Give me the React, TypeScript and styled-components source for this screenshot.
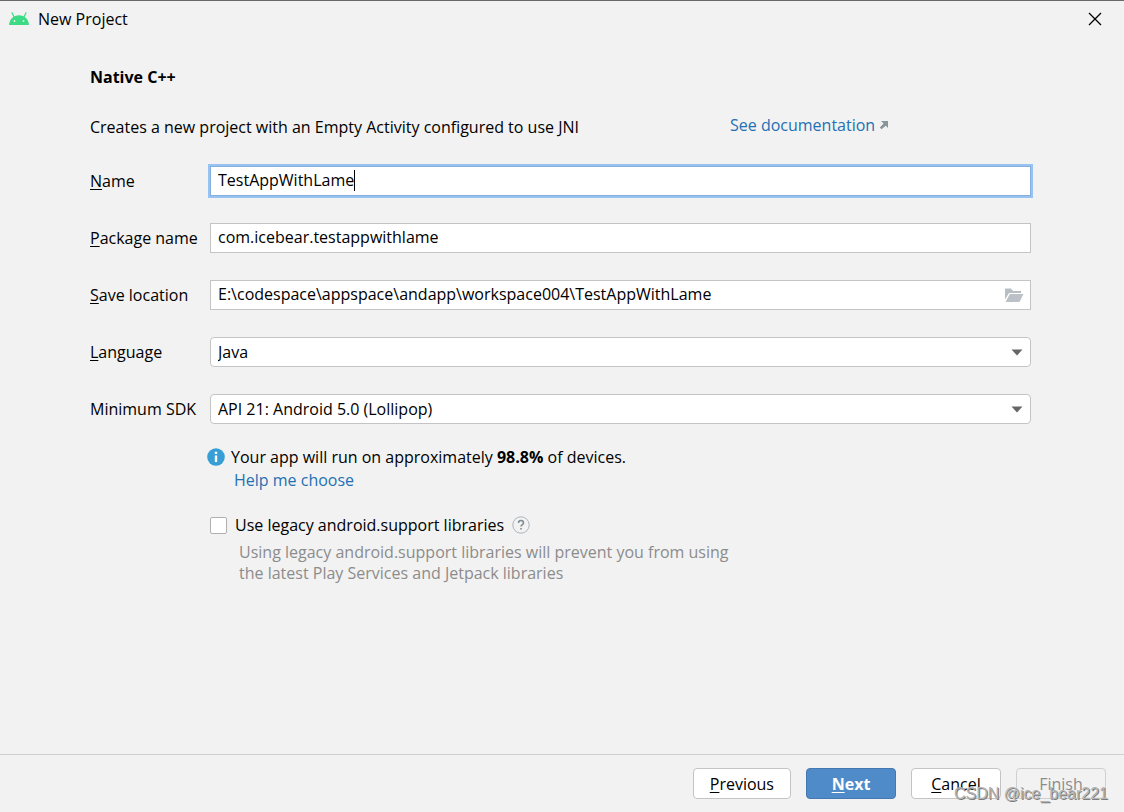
import { useState } from "react";
import type { ReactNode } from "react";
import styled, { createGlobalStyle, css } from "styled-components";

const GlobalStyle = createGlobalStyle`
  *, *::before, *::after { box-sizing: border-box; }
  body {
    margin: 0;
    background: #f2f2f2;
    color: #000;
    font: 16px/22px "Open Sans", "Noto Sans", sans-serif;
  }
  input, select, button { font: inherit; color: inherit; }
`;

const Dialog = styled.div`
  display: flex;
  flex-direction: column;
  min-height: 100vh;
  background: #f2f2f2;
  border-top: 1px solid #6b6869;
`;

const TitleBar = styled.header`
  display: flex;
  align-items: center;
  height: 36px;
  padding: 0 16px 0 8px;
  gap: 8px;
`;

const WindowTitle = styled.span`
  flex: 1;
`;

const CloseButton = styled.button`
  display: flex;
  padding: 6px;
  border: 0;
  background: transparent;
`;

const Content = styled.main`
  flex: 1;
  padding: 29px 93px 24px 90px;
`;

const Heading = styled.h1`
  margin: 0;
  font-size: 16px;
  line-height: 22px;
  font-weight: 700;
`;

const Intro = styled.div`
  display: flex;
  align-items: flex-start;
  margin: 26px 0 28px;
`;

const Description = styled.p`
  flex: 0 0 640px;
  margin: 0;
  padding-top: 2px;
`;

const Link = styled.a`
  display: inline-flex;
  align-items: center;
  gap: 4px;
  color: #2470b3;
  text-decoration: none;
`;

const Form = styled.form`
  display: grid;
  grid-template-columns: 120px 1fr;
  row-gap: 27px;
  align-items: center;
`;

const Label = styled.label`
  white-space: nowrap;
`;

const Mnemonic = styled.span`
  text-decoration: underline;
  text-decoration-thickness: 1px;
  text-underline-offset: 2px;
  text-decoration-skip-ink: none;
`;

const Field = styled.div`
  position: relative;
  display: flex;
`;

const TextInput = styled.input<{ $active?: boolean }>`
  width: 100%;
  height: 30px;
  padding: 0 7px 2px;
  border: 1px solid #c4c4c4;
  border-radius: 0;
  outline: none;
  background: #fff;
  ${({ $active }) =>
    $active &&
    css`
      border-color: #87afda;
      box-shadow: 0 0 0 2px #97c3f3;
    `}
`;

const Caret = styled.span`
  position: absolute;
  top: 4px;
  left: 144px;
  width: 1px;
  height: 21px;
  background: #000;
`;

const BrowseButton = styled.button`
  position: absolute;
  right: 7px;
  top: 7px;
  display: flex;
  padding: 0;
  border: 0;
  background: transparent;
`;

const Select = styled.select`
  appearance: none;
  width: 100%;
  height: 30px;
  padding: 0 30px 0 7px;
  border: 1px solid #c4c4c4;
  border-radius: 4px;
  background: #fff;
`;

const Arrow = styled.svg`
  position: absolute;
  right: 8px;
  top: 12px;
  pointer-events: none;
`;

const Notes = styled.section`
  padding: 22px 0 0 117px;
`;

const NoteLine = styled.div`
  display: flex;
  align-items: center;
  gap: 6px;
`;

const HelpLine = styled.div`
  padding: 1px 0 0 27px;
`;

const Legacy = styled.div`
  display: flex;
  align-items: center;
  margin-top: 23px;
  padding-left: 3px;
`;

const Checkbox = styled.input`
  appearance: none;
  width: 17px;
  height: 17px;
  margin: 0 8px 0 0;
  border: 1px solid #b0b0b0;
  border-radius: 2px;
  background: #fff;
  &:checked { background: #4f8bc9; }
`;

const HelpButton = styled.button`
  display: flex;
  margin-left: 8px;
  padding: 0;
  border: 0;
  background: transparent;
`;

const Hint = styled.p`
  max-width: 560px;
  margin: 6px 0 0;
  padding-left: 32px;
  line-height: 21px;
  color: #8c8c8c;
`;

const Footer = styled.footer`
  position: relative;
  display: flex;
  justify-content: flex-end;
  gap: 15px;
  padding: 13px 18px 13px;
  border-top: 1px solid #cfcfcf;
`;

const Button = styled.button<{ $primary?: boolean }>`
  min-width: 90px;
  height: 31px;
  padding: 0 16px;
  border: 1px solid #c4c4c4;
  border-radius: 4px;
  background: #fff;
  &:disabled {
    color: #8c8c8c;
    background: transparent;
    border-color: #cfcfcf;
  }
  ${({ $primary }) =>
    $primary &&
    css`
      border-color: #4578b0;
      background: #4f8bc9;
      color: #fff;
      font-weight: 700;
    `}
`;

const Watermark = styled.span`
  position: absolute;
  right: 16px;
  bottom: 7px;
  font: 16px/22px "Liberation Sans", sans-serif;
  color: #b4b4b4;
  text-shadow: 1px 1px 0 #7c7c7c;
  pointer-events: none;
`;

function AndroidIcon() {
  return (
    <svg width="22" height="16" viewBox="0 0 22 16" aria-hidden="true">
      <path d="M5.800 5.600 4 1.800M16.200 5.600 18 1.800" stroke="#3ddc84" strokeWidth="1.200" strokeLinecap="round" />
      <path d="M1 14C1.400 8 5.600 4.200 11 4.200S20.600 8 21 14Z" fill="#3ddc84" />
      <circle cx="6.500" cy="10" r="0.900" fill="#f2f2f2" />
      <circle cx="15.500" cy="10" r="0.900" fill="#f2f2f2" />
    </svg>
  );
}

function FolderIcon() {
  return (
    <svg width="20" height="16" viewBox="0 0 20 16" aria-hidden="true">
      <path d="M1 12.500V1.500H7L9 4H17V6H5Z" fill="#b8bfc4" />
      <path d="M1.500 15 5.800 7H19.500L15.500 15Z" fill="#bbc1c6" />
    </svg>
  );
}

function InfoIcon() {
  return (
    <svg width="18" height="18" viewBox="0 0 18 18" aria-hidden="true">
      <circle cx="9" cy="9" r="8.800" fill="#389fd6" />
      <path d="M7.800 3.800H10.200V6H7.800ZM7.800 7.500H10.200V14H7.800Z" fill="#fff" />
    </svg>
  );
}

function HelpIcon() {
  return (
    <svg width="18" height="18" viewBox="0 0 18 18" fill="none" aria-hidden="true">
      <circle cx="9" cy="9" r="8.200" stroke="#afb5ba" />
      <path d="M6.500 7.100C6.500 5.400 7.500 4.600 9 4.600S11.500 5.500 11.500 6.900C11.500 8.500 9 8.700 9 10.600" stroke="#7f8b91" strokeWidth="1.500" />
      <path d="M8.200 11.900H9.800V13.500H8.200Z" fill="#7f8b91" />
    </svg>
  );
}

function SelectArrow() {
  return (
    <Arrow width="12" height="7" viewBox="0 0 12 7" aria-hidden="true">
      <path d="M0.500 0.500H11.500L6 6.500Z" fill="#666" />
    </Arrow>
  );
}

function FieldRow({ id, label, children }: { id: string; label: ReactNode; children: ReactNode }) {
  return (
    <>
      <Label htmlFor={id}>{label}</Label>
      <Field>{children}</Field>
    </>
  );
}

export default function App() {
  const [name, setName] = useState("TestAppWithLame");
  const [pkg, setPkg] = useState("com.icebear.testappwithlame");
  const [path, setPath] = useState("E:\\codespace\\appspace\\andapp\\workspace004\\TestAppWithLame");

  return (
    <Dialog>
      <GlobalStyle />
      <TitleBar>
        <AndroidIcon />
        <WindowTitle>New Project</WindowTitle>
        <CloseButton aria-label="Close">
          <svg width="14" height="14" viewBox="0 0 14 14" aria-hidden="true">
            <path d="M1 1 13 13M13 1 1 13" stroke="#000" strokeWidth="1.300" />
          </svg>
        </CloseButton>
      </TitleBar>

      <Content>
        <Heading>Native C++</Heading>
        <Intro>
          <Description>Creates a new project with an Empty Activity configured to use JNI</Description>
          <Link href="#documentation">
            See documentation
            <svg width="10" height="10" viewBox="0 0 10 10" aria-hidden="true">
              <path d="M2 1H9V8L6.800 5.800 2.500 9.200 0.800 7.500 4.600 3.500Z" fill="#8a949b" />
            </svg>
          </Link>
        </Intro>

        <Form>
          <FieldRow id="name" label={<><Mnemonic>N</Mnemonic>ame</>}>
            <TextInput id="name" $active value={name} onChange={(e) => setName(e.target.value)} />
            <Caret />
          </FieldRow>
          <FieldRow id="package" label={<><Mnemonic>P</Mnemonic>ackage name</>}>
            <TextInput id="package" value={pkg} onChange={(e) => setPkg(e.target.value)} />
          </FieldRow>
          <FieldRow id="location" label={<><Mnemonic>S</Mnemonic>ave location</>}>
            <TextInput id="location" value={path} onChange={(e) => setPath(e.target.value)} />
            <BrowseButton type="button" aria-label="Browse">
              <FolderIcon />
            </BrowseButton>
          </FieldRow>
          <FieldRow id="language" label={<><Mnemonic>L</Mnemonic>anguage</>}>
            <Select id="language">
              <option>Java</option>
            </Select>
            <SelectArrow />
          </FieldRow>
          <FieldRow id="sdk" label="Minimum SDK">
            <Select id="sdk">
              <option>API 21: Android 5.0 (Lollipop)</option>
            </Select>
            <SelectArrow />
          </FieldRow>
        </Form>

        <Notes>
          <NoteLine>
            <InfoIcon />
            <span>
              Your app will run on approximately <b>98.8%</b> of devices.
            </span>
          </NoteLine>
          <HelpLine>
            <Link href="#choose">Help me choose</Link>
          </HelpLine>
          <Legacy>
            <Checkbox type="checkbox" id="legacy" />
            <Label htmlFor="legacy">Use legacy android.support libraries</Label>
            <HelpButton type="button" aria-label="Help">
              <HelpIcon />
            </HelpButton>
          </Legacy>
          <Hint>
            Using legacy android.support libraries will prevent you from using
            <br />
            the latest Play Services and Jetpack libraries
          </Hint>
        </Notes>
      </Content>

      <Footer>
        <Button><Mnemonic>P</Mnemonic>revious</Button>
        <Button $primary><Mnemonic>N</Mnemonic>ext</Button>
        <Button><Mnemonic>C</Mnemonic>ancel</Button>
        <Button disabled>Finish</Button>
        <Watermark>CSDN @ice_bear221</Watermark>
      </Footer>
    </Dialog>
  );
}
